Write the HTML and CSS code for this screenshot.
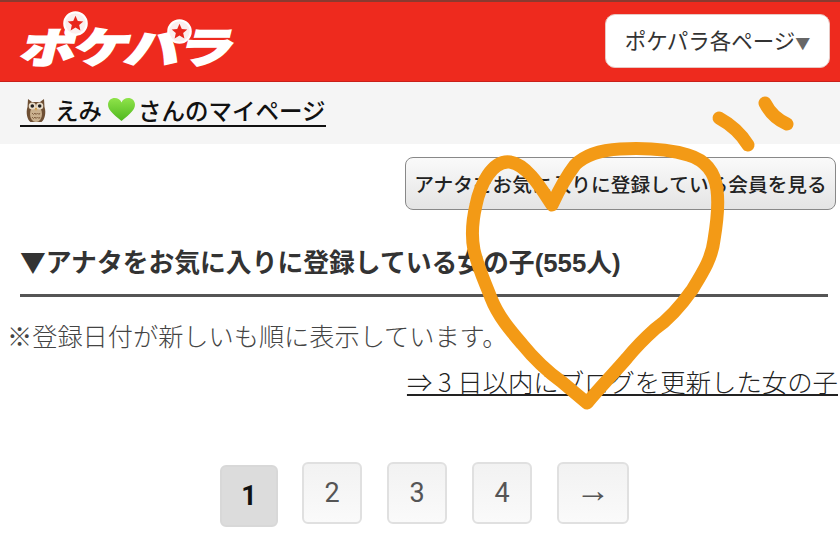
FILE: index.html
```html
<!DOCTYPE html>
<html lang="ja">
<head>
 <meta charset="UTF-8">
 <title>ポケパラ マイページ</title>
 <link rel="stylesheet" href="styles.css">
</head>
<body>

 <div class="page">
  <header class="header">
   <div class="logo">
    <span class="logo-text">ポケパラ</span>
    <svg class="logo-star star-a" viewBox="0 0 24 24"><circle cx="12" cy="12" r="10.800" fill="#fbeeee" stroke="#fff" stroke-width="2"/><path d="M12 4.500l2.200 5 5.300.5-4 3.500 1.200 5.200-4.700-2.800-4.700 2.800 1.200-5.200-4-3.500 5.300-.5z" fill="#e8261c"/></svg>
    <svg class="logo-star star-b" viewBox="0 0 24 24"><circle cx="12" cy="12" r="10.800" fill="#fbeeee" stroke="#fff" stroke-width="2"/><path d="M12 4.500l2.200 5 5.300.5-4 3.500 1.200 5.200-4.700-2.800-4.700 2.800 1.200-5.200-4-3.500 5.300-.5z" fill="#e8261c"/></svg>
   </div>
   <button class="menu-btn">ポケパラ各ページ<span class="menu-arrow">▼</span></button>
  </header>

  <div class="subbar">
   <a class="mypage" href="#">
    <svg class="owl" viewBox="0 0 24 28">
     <path d="M4 3l4 3h8l4-3 .5 8c2 6 0 13-3 15H6.500c-3-2-5-9-3-15z" fill="#6e4f34"/>
     <ellipse cx="12" cy="18" rx="6" ry="8" fill="#c9b08e"/>
     <circle cx="8.300" cy="10" r="3.600" fill="#e8dcc8"/>
     <circle cx="15.700" cy="10" r="3.600" fill="#e8dcc8"/>
     <circle cx="8.300" cy="10" r="1.800" fill="#222"/>
     <circle cx="15.700" cy="10" r="1.800" fill="#222"/>
     <path d="M11 12h2l-1 3z" fill="#d49a3a"/>
     <path d="M8 17l1.500 1.500L11 17l1 1.500L13.500 17l1.500 1.500L16 17M8 21l1.500 1.500L11 21l1 1.500 1.500-1.500 1.500 1.500L16 21" fill="none" stroke="#7a5a3c" stroke-width=".9"/>
    </svg>
    <span class="mypage-text">えみ</span>
    <svg class="green-heart" viewBox="0 0 28 24">
     <defs>
      <linearGradient id="hg" x1="0" y1="0" x2="0" y2="1">
       <stop offset="0" stop-color="#8fe34a"/>
       <stop offset="1" stop-color="#4fb81e"/>
      </linearGradient>
     </defs>
     <path d="M14 23C5 16 1 12 1 7.500 1 3.500 4 1 7.500 1 10.500 1 13 2.800 14 5.200 15 2.800 17.500 1 20.500 1 24 1 27 3.500 27 7.500 27 12 23 16 14 23z" fill="url(#hg)"/>
    </svg><span class="mypage-text">さんのマイページ</span>
   </a>
  </div>

  <div class="fav-row">
   <button class="fav-btn">アナタをお気に入りに登録している会員を見る</button>
  </div>

  <h2 class="title"><span class="title-mark">▼</span>アナタをお気に入りに登録している女の子(555人)</h2>

  <p class="note">※登録日付が新しいも順に表示しています。</p>
  <div class="blog-row"><a class="blog-link" href="#">⇒ 3 日以内にブログを更新した女の子</a></div>

  <nav class="pager">
   <span class="pg pg-now">1</span>
   <a class="pg" href="#">2</a>
   <a class="pg" href="#">3</a>
   <a class="pg" href="#">4</a>
   <a class="pg pg-next" href="#"><span class="pg-arrow">→</span></a>
  </nav>

  <!-- hand drawn marks on top of the screenshot -->
  <svg class="scribble" viewBox="0 0 840 554">
   <path d="M552 205C542 190 528 165 510 162C492 160 480 185 476 205C472 222 471 235 474 250C478 268 485 282 491 298C498 316 510 330 522 344C535 360 548 372 562 382L587 403C602 385 615 372 627 358C636 347 645 338 655 329C668 320 680 307 692 290C703 272 712 258 714 240C717 222 719 205 717 190C715 172 705 160 688 155C665 148 640 148 620 149C600 150 585 155 575 165C565 178 558 192 552 205Z" />
   <path d="M719 118C730 124 740 132 748 145" />
   <path d="M765 103C770 113 778 120 787 124" />
  </svg>
 </div>

</body>
</html>
```

FILE: styles.css
```css
* {
  box-sizing: border-box;
}

body {
  margin: 0;
  background: #fff;
  font-family: "Noto Sans CJK JP", "Liberation Sans", sans-serif;
  color: #222;
}

.page {
  position: relative;
  width: 840px;
  height: 554px;
  overflow: hidden;
}

.header {
  height: 82px;
  background: #ee2a1e;
  border-top: 2px solid #8a3a30;
  border-bottom: 1px solid #c9201a;
  display: flex;
  align-items: center;
  justify-content: space-between;
  padding: 0 10px 0 20px;
}

.logo {
  position: relative;
  width: 220px;
  height: 60px;
}

.logo-text {
  display: block;
  font-size: 55px;
  font-weight: 900;
  line-height: 60px;
  letter-spacing: -1.500px;
  color: #fff;
  -webkit-text-stroke: 2.500px #fff;
  white-space: nowrap;
  transform: skewX(-14deg) scaleY(.76);
  transform-origin: left center;
  margin: 3px 0 0 3px;
}

.logo-star {
  position: absolute;
  width: 25px;
  height: 25px;
}

.star-a {
  left: 43px;
  top: -1px;
}

.star-b {
  left: 147px;
  top: 7px;
}

.menu-btn {
  width: 225px;
  height: 54px;
  margin-top: -1px;
  background: #fff;
  border: 1px solid #e8c8c4;
  border-radius: 10px;
  font-family: inherit;
  font-size: 21.500px;
  color: #333;
  padding: 0 0 4px;
  white-space: nowrap;
}

.menu-arrow {
  color: #666;
  font-size: 15px;
}

.subbar {
  height: 62px;
  background: #f5f5f5;
  padding: 12px 0 0 20px;
}

.mypage {
  display: inline-flex;
  align-items: center;
  height: 33px;
  color: #111;
  font-size: 23.500px;
  font-weight: 500;
  text-decoration: none;
  border-bottom: 2px solid #111;
  white-space: nowrap;
}

.owl {
  width: 24px;
  height: 28px;
  margin: 0 7px 0 4px;
}

.green-heart {
  width: 29px;
  height: 25px;
  margin: 0 2px 0 5px;
}

.fav-row {
  display: flex;
  justify-content: flex-end;
  padding: 13px 4px 0 0;
}

.fav-btn {
  width: 431px;
  height: 53px;
  border: 1px solid #888;
  border-radius: 8px;
  background: linear-gradient(#fafafa, #e4e4e4);
  font-family: inherit;
  font-size: 19.700px;
  font-weight: 500;
  color: #222;
  padding: 0;
  white-space: nowrap;
}

.title {
  margin: 33px 12px 0 20px;
  height: 54px;
  border-bottom: 3px solid #555;
  font-size: 25.800px;
  font-weight: 700;
  line-height: 36px;
  color: #333;
  white-space: nowrap;
  font-family: "Liberation Sans", "Noto Sans CJK JP", sans-serif;
}

.title-mark {
  font-family: "Noto Sans CJK JP", sans-serif;
}

.note {
  margin: 21px 0 0 7px;
  font-size: 25.200px;
  font-weight: 300;
  line-height: 34px;
  color: #444;
  white-space: nowrap;
}

.blog-row {
  display: flex;
  justify-content: flex-end;
  margin-top: 13px;
  padding-right: 2px;
}

.blog-link {
  font-size: 25.400px;
  font-weight: 300;
  line-height: 32px;
  color: #222;
  white-space: nowrap;
}

.pager {
  display: flex;
  gap: 25px;
  padding-left: 220px;
  margin-top: 65px;
  align-items: flex-start;
}

.pg {
  width: 60px;
  height: 62px;
  display: flex;
  align-items: center;
  justify-content: center;
  border: 2px solid #e0e0e0;
  border-radius: 6px;
  background: linear-gradient(#f2f2f2, #fafafa);
  font-family: Roboto, "Liberation Sans", sans-serif;
  font-size: 27px;
  color: #555;
  text-decoration: none;
}

.pg-now {
  width: 58px;
  margin-top: 3px;
  margin-right: -1px;
  background: #dcdcdc;
  border-color: #d8d8d8;
  font-weight: 700;
  color: #111;
}

.pg-next {
  width: 72px;
}

.pg-arrow {
  font-family: "Liberation Sans", sans-serif;
  font-size: 35px;
  line-height: 30px;
  margin-top: -6px;
}

.scribble {
  position: absolute;
  left: 0;
  top: 0;
  width: 840px;
  height: 554px;
  fill: none;
  stroke: #f39a16;
  stroke-width: 13;
  stroke-linecap: round;
  stroke-linejoin: round;
}
```
